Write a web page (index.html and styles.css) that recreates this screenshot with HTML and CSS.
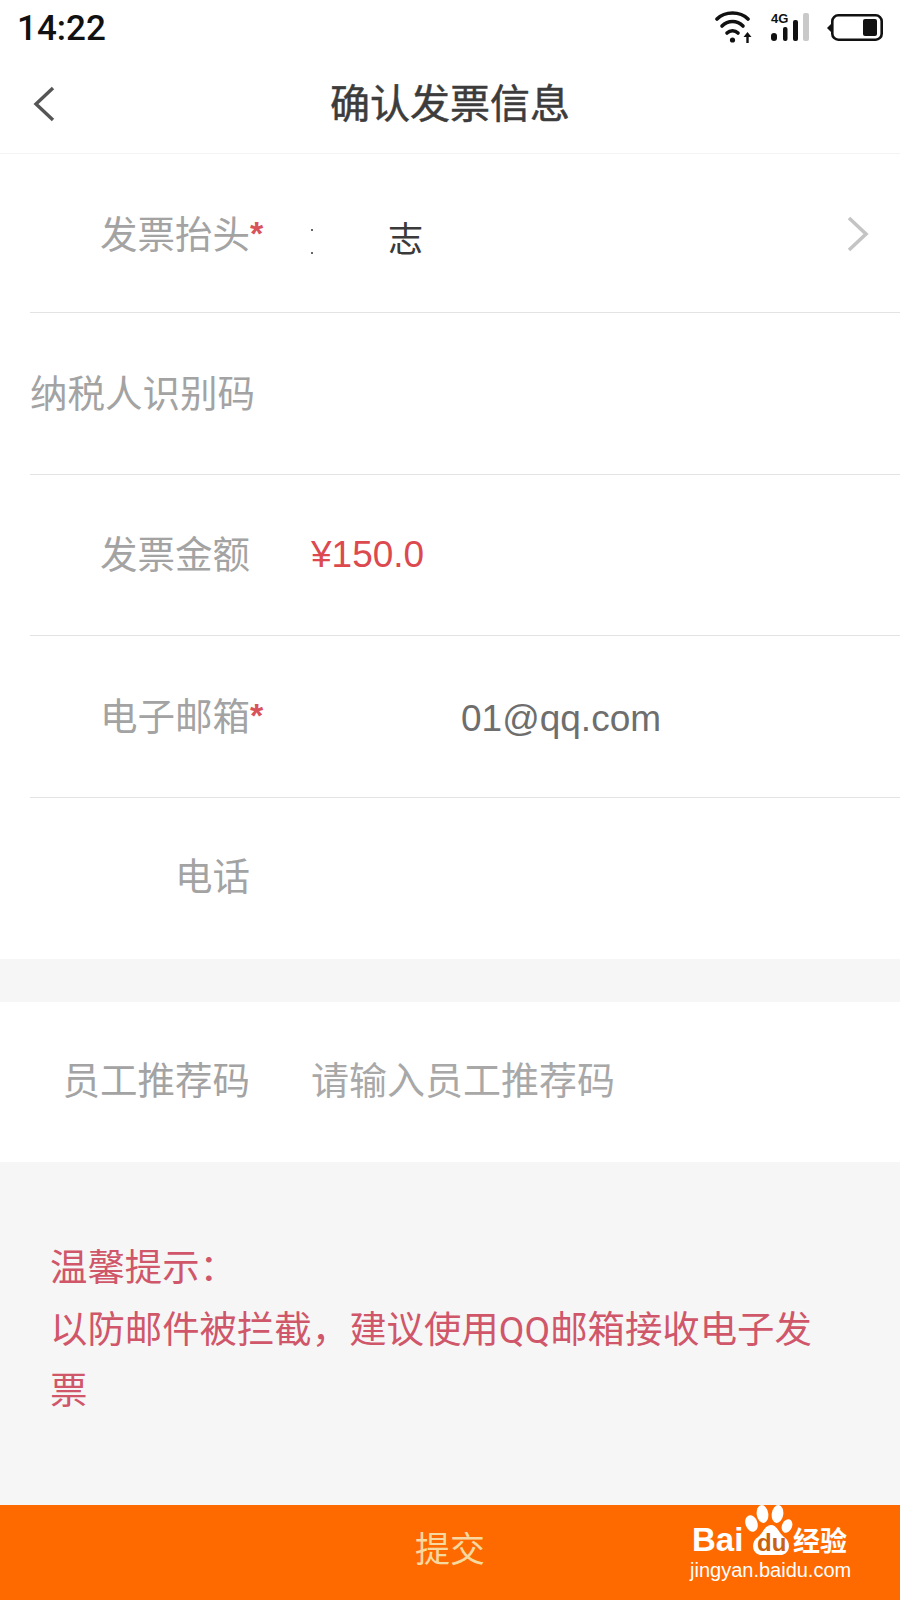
FILE: index.html
```html
<!DOCTYPE html>
<html lang="zh-CN">
<head>
    <meta charset="UTF-8">
    <meta name="viewport" content="width=device-width, initial-scale=1.0">
    <title>确认发票信息</title>
    <link rel="stylesheet" href="styles.css">
</head>
<body>
    <div class="page">
        <div class="status-bar">
            <span class="status-time">14:22</span>
            <svg class="status-icons" width="175" height="40" viewBox="0 0 175 40">
                <!-- wifi -->
                <g fill="none" stroke="#111" stroke-width="3.6" stroke-linecap="round">
                    <path d="M2 12 C10 4 25 4 33 12"/>
                    <path d="M7 19 C13 13 22 13 28 19"/>
                    <path d="M12 26 C15 23 20 23 23 26"/>
                </g>
                <circle cx="17.5" cy="33" r="2.6" fill="#111"/>
                <path d="M28.5 30 L32.5 25 L36.5 30 H33.7 V36 H31.3 V30 Z" fill="#111"/>
                <!-- 4G + signal -->
                <text x="56" y="16" class="status-net">4G</text>
                <rect x="56" y="26" width="6" height="8" rx="3" fill="#111"/>
                <rect x="68" y="20" width="4.5" height="14" rx="2" fill="#111"/>
                <rect x="78" y="13" width="5" height="21" rx="2" fill="#111"/>
                <rect x="88" y="6" width="6" height="28" rx="2" fill="#c9c9c9"/>
                <!-- battery -->
                <path d="M116 17 L112 21 L116 25 Z" fill="#111"/>
                <rect x="117.3" y="8.3" width="49.4" height="24.4" rx="6" fill="none" stroke="#111" stroke-width="2.6"/>
                <rect x="148" y="12" width="14" height="17" rx="2" fill="#111"/>
            </svg>
        </div>

        <div class="nav-bar">
            <svg class="nav-back" width="24" height="36" viewBox="0 0 24 36">
                <path d="M21 2 L4 18 L21 34" fill="none" stroke="#555" stroke-width="3.4"/>
            </svg>
            <h1 class="nav-title">确认发票信息</h1>
        </div>

        <div class="form-section">
            <div class="form-row">
                <span class="form-label">发票抬头<i class="required">*</i></span>
                <span class="form-value value-name"><span class="mask-dots"></span>志</span>
                <svg class="row-arrow" width="24" height="36" viewBox="0 0 24 36">
                    <path d="M3 2 L20 18 L3 34" fill="none" stroke="#c4c4c4" stroke-width="3.6"/>
                </svg>
            </div>
            <div class="form-row">
                <span class="form-label">纳税人识别码</span>
            </div>
            <div class="form-row">
                <span class="form-label">发票金额</span>
                <span class="form-value value-price">¥150.0</span>
            </div>
            <div class="form-row">
                <span class="form-label">电子邮箱<i class="required">*</i></span>
                <span class="form-value value-email">01@qq.com</span>
            </div>
            <div class="form-row">
                <span class="form-label">电话</span>
            </div>
        </div>

        <div class="form-section referral">
            <div class="form-row">
                <span class="form-label">员工推荐码</span>
                <span class="form-value value-hint">请输入员工推荐码</span>
            </div>
        </div>

        <div class="tips">
            <p>温馨提示：</p>
            <p>以防邮件被拦截，建议使用QQ邮箱接收电子发票</p>
        </div>

        <button class="submit-btn" type="button">提交</button>

        <div class="watermark">
            <div class="wm-logo">
                <span class="wm-bai">Bai</span>
                <svg class="wm-paw" width="50" height="52" viewBox="0 0 50 52">
                    <ellipse cx="8.5" cy="18.5" rx="6" ry="8.5" transform="rotate(-18 8.5 18.5)" fill="#fff"/>
                    <ellipse cx="19.5" cy="9" rx="5.8" ry="9" transform="rotate(-8 19.5 9)" fill="#fff"/>
                    <ellipse cx="34.5" cy="9" rx="5.8" ry="9" transform="rotate(8 34.5 9)" fill="#fff"/>
                    <ellipse cx="44" cy="21" rx="5" ry="7" transform="rotate(24 44 21)" fill="#fff"/>
                    <path d="M28 20 C34 20 36 28 41 32 C49 37 47 50 37 50 H19 C9 50 7 37 15 32 C20 28 22 20 28 20 Z" fill="#fff"/>
                </svg>
                <span class="wm-du">du</span>
                <span class="wm-jy">经验</span>
            </div>
            <div class="wm-url">jingyan.baidu.com</div>
        </div>
    </div>
</body>
</html>
```

FILE: styles.css
```css
/* page */
body {
    margin: 0;
    background-color: #f6f6f6;
    font-family: "Liberation Sans", "Noto Sans CJK SC", sans-serif;
}

.page {
    position: relative;
    width: 900px;
    height: 1600px;
    display: flex;
    flex-direction: column;
    overflow: hidden;
}

/* status bar */
.status-bar {
    height: 56px;
    background-color: #fff;
    display: flex;
    justify-content: space-between;
    align-items: center;
    padding: 0 10px 0 17px;
}

.status-time {
    font-family: Roboto, sans-serif;
    font-size: 35px;
    font-weight: 500;
    color: #111;
}

.status-icons {
    margin-top: -2px;
}

.status-net {
    font-family: "Liberation Sans", sans-serif;
    font-size: 13px;
    font-weight: bold;
    fill: #111;
}

/* nav */
.nav-bar {
    position: relative;
    height: 98px;
    background-color: #fff;
    border-bottom: 1px solid #f4f4f4;
    box-sizing: border-box;
    display: flex;
    align-items: center;
    justify-content: center;
}

.nav-back {
    position: absolute;
    left: 32px;
    top: 30px;
}

.nav-title {
    margin: -8px 0 0 0;
    font-size: 40px;
    font-weight: 400;
    -webkit-text-stroke: 0.5px #3c3c3c;
    color: #3c3c3c;
    font-family: "Noto Sans CJK SC", sans-serif;
}

/* form rows */
.form-section {
    background-color: #fff;
    padding-left: 30px;
}

.form-row {
    position: relative;
    height: 161.5px;
    border-bottom: 1px solid #e3e3e3;
    display: flex;
    align-items: center;
    box-sizing: border-box;
    padding-bottom: 6px;
}

.form-row:first-child {
    height: 159px;
    padding-bottom: 4px;
}

.form-row:last-child {
    border-bottom: none;
    padding-bottom: 10px;
}

.referral .form-row {
    height: 160px;
    padding-bottom: 10px;
}

.form-label {
    position: relative;
    width: 220px;
    text-align: right;
    flex-shrink: 0;
    font-size: 37.5px;
    color: #a3a3a3;
    white-space: nowrap;
}

.required {
    position: absolute;
    left: 100%;
    top: 10px;
    font-style: normal;
    font-weight: bold;
    color: #d9535a;
    font-size: 34px;
}

.form-value {
    margin-left: 61px;
    font-size: 37px;
}

.value-name {
    color: #3a3a3a;
    font-size: 35px;
    display: flex;
    align-items: center;
    margin-top: 10px;
}

.mask-dots {
    width: 2px;
    height: 25px;
    margin-top: 10px;
    margin-right: 75px;
    border-top: 2px solid #666;
    border-bottom: 2px solid #666;
    box-sizing: border-box;
}

.row-arrow {
    position: absolute;
    right: 30px;
    top: 62px;
}

.value-price {
    color: #dc4a4f;
    margin-top: 6px;
}

.value-email {
    margin-left: 211px;
    margin-top: 12px;
    color: #6e6e6e;
}

.value-hint {
    color: #a8a8a8;
    font-size: 38px;
}

.referral {
    margin-top: 43px;
}

/* tips */
.tips {
    flex: 1;
    padding: 76px 60px 0 50px;
    color: #d0566a;
    font-family: Roboto, "Noto Sans CJK SC", sans-serif;
    font-size: 37.4px;
    line-height: 61.5px;
}

.tips p {
    margin: 0;
}

/* submit */
.submit-btn {
    height: 95px;
    border: none;
    padding: 0 0 12px;
    background-color: #ff6a00;
    color: #f7d9a0;
    font-size: 35px;
    font-family: "Noto Sans CJK SC", sans-serif;
}

/* watermark */
.watermark {
    position: absolute;
    left: 690px;
    top: 1505px;
    width: 170px;
    color: #fff;
}

.wm-logo {
    position: relative;
    height: 52px;
}

.wm-bai {
    position: absolute;
    left: 2px;
    top: 18px;
    font-size: 33px;
    line-height: 33px;
    font-weight: bold;
}

.wm-paw {
    position: absolute;
    left: 53px;
    top: 0;
}

.wm-du {
    position: absolute;
    left: 67px;
    top: 26px;
    font-size: 24px;
    line-height: 24px;
    font-weight: bold;
    color: #c9610f;
}

.wm-jy {
    position: absolute;
    left: 103px;
    top: 15px;
    font-size: 27px;
    line-height: 40px;
    font-weight: bold;
    font-family: "Noto Sans CJK SC", sans-serif;
}

.wm-url {
    font-size: 20px;
    line-height: 26px;
    white-space: nowrap;
}
```
